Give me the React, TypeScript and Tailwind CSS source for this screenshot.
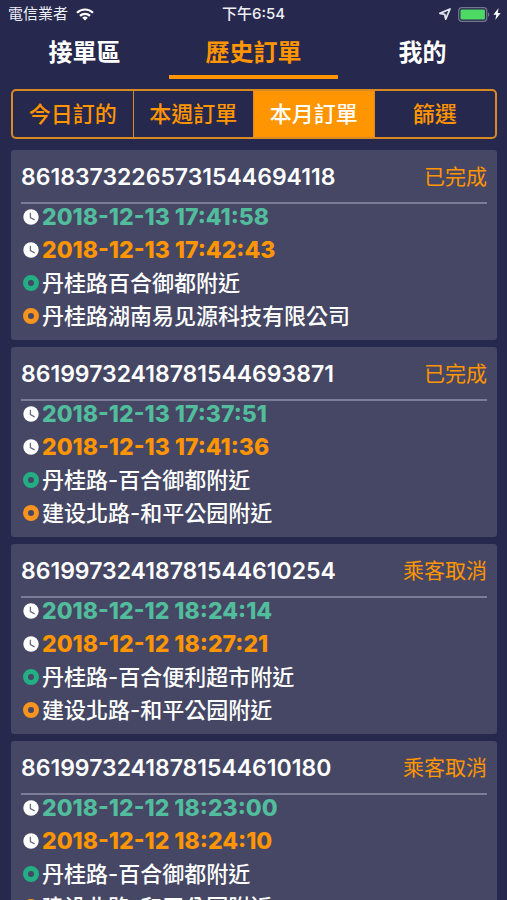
import React, { useState } from "react";

interface Order {
  orderNumber: string;
  status: string;
  startTime: string;
  endTime: string;
  from: string;
  to: string;
}

const orders: Order[] = [
  {
    orderNumber: "86183732265731544694118",
    status: "已完成",
    startTime: "2018-12-13 17:41:58",
    endTime: "2018-12-13 17:42:43",
    from: "丹桂路百合御都附近",
    to: "丹桂路湖南易见源科技有限公司",
  },
  {
    orderNumber: "86199732418781544693871",
    status: "已完成",
    startTime: "2018-12-13 17:37:51",
    endTime: "2018-12-13 17:41:36",
    from: "丹桂路-百合御都附近",
    to: "建设北路-和平公园附近",
  },
  {
    orderNumber: "86199732418781544610254",
    status: "乘客取消",
    startTime: "2018-12-12 18:24:14",
    endTime: "2018-12-12 18:27:21",
    from: "丹桂路-百合便利超市附近",
    to: "建设北路-和平公园附近",
  },
  {
    orderNumber: "86199732418781544610180",
    status: "乘客取消",
    startTime: "2018-12-12 18:23:00",
    endTime: "2018-12-12 18:24:10",
    from: "丹桂路-百合御都附近",
    to: "建设北路-和平公园附近",
  },
];

const tabs = ["接單區", "歷史訂單", "我的"];
const filters = ["今日訂的", "本週訂單", "本月訂單", "篩選"];

const ClockIcon = () => (
  <svg viewBox="0 0 16 16" className="size-4 shrink-0" aria-hidden="true">
    <circle cx="8" cy="8" r="7.7" fill="#fff" />
    <path d="M7.4 3.8v4.8l4.2 2.2" fill="none" stroke="#6a6b82" strokeWidth="1.3" />
  </svg>
);

const StatusBar = () => (
  <div className="grid h-7 shrink-0 grid-cols-3 items-center px-[6px] text-[15px] leading-5 text-[#eeeef6]">
    <div className="flex items-center gap-2 pl-[2px]">
      <span>電信業者</span>
      <svg viewBox="0 0 18 13" className="h-[13px] w-[18px]" aria-hidden="true">
        <g fill="none" stroke="#fff" strokeWidth="2.2">
          <path d="M1 4.8a11.4 11.4 0 0 1 16 0" />
          <path d="M4 7.9a7.1 7.1 0 0 1 10 0" />
        </g>
        <path d="M9 12.6 6.2 9.8a4 4 0 0 1 5.6 0z" fill="#fff" />
      </svg>
    </div>
    <span className="text-center font-medium">下午6:54</span>
    <div className="flex items-center justify-end gap-[3px]">
      <svg viewBox="0 0 12 12" className="mr-1 size-3" aria-hidden="true">
        <path
          d="M11 1 .9 5.3l4.8 1 1 4.8z"
          fill="none"
          stroke="#e4e4ee"
          strokeWidth="1.8"
          strokeLinejoin="round"
        />
      </svg>
      <svg viewBox="0 0 32 15" className="h-[15px] w-8" aria-hidden="true">
        <rect x="0.7" y="0.7" width="28" height="13.6" rx="3" fill="none" stroke="#74758f" strokeWidth="1.3" />
        <rect x="2.5" y="2.5" width="24.4" height="10" rx="1.2" fill="#4cd964" />
        <path d="M30 5.2c1.8.8 1.8 3.8 0 4.6z" fill="#74758f" />
      </svg>
      <svg viewBox="0 0 8 12" className="h-3 w-2" aria-hidden="true">
        <path d="M5.6 0 .4 6.8h2.9L2.3 12l5.3-7.1H4.7z" fill="#fff" />
      </svg>
    </div>
  </div>
);

const OrderCard = ({ order }: { order: Order }) => {
  return (
    <li className="rounded-[3px] bg-[#454764] px-[10px] pb-3">
      <div className="flex h-[54px] items-center justify-between border-b-2 border-[#7c7d96] pt-[2px]">
        <h2 className="text-[23px] leading-6 font-semibold text-white">{order.orderNumber}</h2>
        <span className="text-[21px] leading-6 text-[#ff9500]">{order.status}</span>
      </div>
      <div className="flex flex-col gap-[9px] pt-px pl-[2px] leading-6">
        <div className="flex items-center gap-[3px] text-[23px] font-extrabold text-[#52bd9c]">
          <ClockIcon />
          <time>{order.startTime}</time>
        </div>
        <div className="flex items-center gap-[3px] text-[23px] font-extrabold text-[#ff9500]">
          <ClockIcon />
          <time>{order.endTime}</time>
        </div>
        <div className="flex items-center gap-[3px] text-[22px] font-medium text-white">
          <span className="size-4 shrink-0 rounded-full border-5 border-[#23ae84]" />
          <p>{order.from}</p>
        </div>
        <div className="flex items-center gap-[3px] text-[22px] font-medium text-white">
          <span className="size-4 shrink-0 rounded-full border-5 border-[#f7931e]" />
          <p>{order.to}</p>
        </div>
      </div>
    </li>
  );
};

const App: React.FC = () => {
  const [activeTab, setActiveTab] = useState<number>(1);
  const [activeFilter, setActiveFilter] = useState<number>(2);

  return (
    <div className="flex h-screen flex-col overflow-hidden bg-[#26284d] font-['Inter','Noto_Sans_CJK_TC',sans-serif]">
      <StatusBar />

      {/* Tabs */}
      <nav className="grid shrink-0 grid-cols-3">
        {tabs.map((tab, index) => (
          <button
            key={tab}
            onClick={() => setActiveTab(index)}
            className={`h-[51px] cursor-pointer border-b-4 pt-[2px] text-2xl leading-[45px] font-bold ${
              index === activeTab
                ? "border-[#ff9500] text-[#ff9500]"
                : "border-transparent text-white"
            }`}
          >
            {tab}
          </button>
        ))}
      </nav>

      {/* Filters */}
      <div className="mt-[10px] mr-[10px] ml-[11px] grid shrink-0 grid-cols-4 divide-x divide-[#d98a22] overflow-hidden rounded-[5px] border-2 border-[#d98a22]">
        {filters.map((filter, index) => (
          <button
            key={filter}
            onClick={() => setActiveFilter(index)}
            className={`h-[46px] cursor-pointer text-[22px] leading-[46px] font-medium ${
              index === activeFilter ? "bg-[#ff9500] text-white" : "text-[#ff9500]"
            }`}
          >
            {filter}
          </button>
        ))}
      </div>

      {/* Orders */}
      <ul className="mt-[11px] mr-[10px] ml-[11px] flex min-h-0 flex-1 flex-col gap-[7px] overflow-y-auto [scrollbar-width:none] [&>*]:shrink-0">
        {orders.map((order) => (
          <OrderCard key={order.orderNumber} order={order} />
        ))}
      </ul>
    </div>
  );
};

export default App;
